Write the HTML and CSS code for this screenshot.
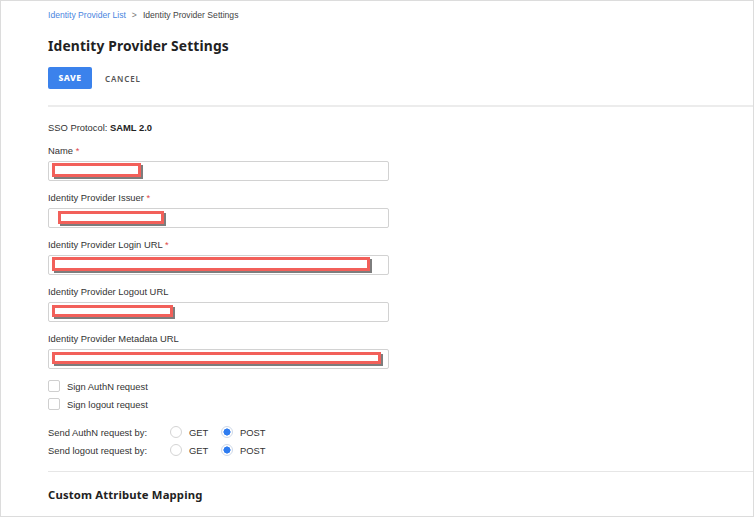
FILE: index.html
```html
<!DOCTYPE html>
<html>
<head>
<meta charset="utf-8">
<link rel="stylesheet" href="styles.css">
</head>
<body>
<div class="frame">
  <div class="head">
    <nav class="crumbs">
      <a class="crumb-link">Identity Provider List</a>
      <span class="crumb-sep">&gt;</span>
      <span class="crumb-current">Identity Provider Settings</span>
    </nav>
    <h1 class="title">Identity Provider Settings</h1>
    <div class="actions">
      <button class="btn-save">SAVE</button>
      <button class="btn-cancel">CANCEL</button>
    </div>
  </div>
  <div class="divider"></div>
  <div class="body">
    <p class="protocol">SSO Protocol: <b>SAML 2.0</b></p>

    <div class="field">
      <label class="label">Name <span class="req">*</span></label>
      <div class="input"><span class="redact" style="width:89px"></span></div>
    </div>
    <div class="field">
      <label class="label">Identity Provider Issuer <span class="req">*</span></label>
      <div class="input"><span class="redact r-in" style="width:106px"></span></div>
    </div>
    <div class="field">
      <label class="label">Identity Provider Login URL <span class="req">*</span></label>
      <div class="input"><span class="redact" style="width:318px"></span></div>
    </div>
    <div class="field">
      <label class="label">Identity Provider Logout URL</label>
      <div class="input"><span class="redact r-thin" style="width:121px"></span></div>
    </div>
    <div class="field">
      <label class="label">Identity Provider Metadata URL</label>
      <div class="input"><span class="redact r-thin" style="width:329px"></span></div>
    </div>

    <div class="checks">
      <div class="check-row"><span class="checkbox"></span><span>Sign AuthN request</span></div>
      <div class="check-row"><span class="checkbox"></span><span>Sign logout request</span></div>
    </div>

    <div class="radios">
      <div class="radio-row">
        <span class="radio-label">Send AuthN request by:</span>
        <span class="radio"></span><span class="radio-text">GET</span>
        <span class="radio on"></span><span class="radio-text">POST</span>
      </div>
      <div class="radio-row">
        <span class="radio-label">Send logout request by:</span>
        <span class="radio"></span><span class="radio-text">GET</span>
        <span class="radio on"></span><span class="radio-text">POST</span>
      </div>
    </div>
  </div>
  <div class="divider thin"></div>
  <div class="body">
    <h2 class="subtitle">Custom Attribute Mapping</h2>
    <p class="cut">Choose from attribute fields that are sent by the identity provider to map attributes</p>
  </div>
</div>
</body>
</html>
```
FILE: styles.css
```css
html, body {
  margin: 0;
  padding: 0;
  background: #fff;
}
.frame {
  box-sizing: border-box;
  width: 754px;
  height: 517px;
  border: 1px solid #dcdcdc;
  overflow: hidden;
  font-family: "Liberation Sans", Arial, sans-serif;
  font-size: 9.4px;
  color: #333;
  background: #fff;
}
.head {
  padding: 8px 0 0 47px;
}
.crumbs {
  display: flex;
  align-items: center;
  height: 12px;
  line-height: 12px;
  font-size: 8.6px;
}
.crumb-link { color: #4a86e0; }
.crumb-sep { color: #777; margin: 0 6px 0 6px; }
.crumb-current { color: #444; }
.title {
  margin: 15px 0 0 0;
  font-family: "Noto Sans", "Open Sans", sans-serif;
  font-weight: 700;
  font-size: 13.8px;
  line-height: 20px;
  height: 20px;
  color: #222;
  letter-spacing: 0.15px;
}
.actions {
  display: flex;
  align-items: center;
  margin-top: 11px;
}
.btn-save {
  width: 44px;
  height: 22px;
  border: none;
  border-radius: 2px;
  background: #3b82ec;
  color: #fff;
  font-family: "Noto Sans", "Open Sans", sans-serif;
  font-weight: 800;
  font-size: 8.6px;
  letter-spacing: 0.5px;
  padding: 0;
}
.btn-cancel {
  margin-left: 13px;
  border: none;
  background: none;
  padding: 0;
  font-family: "Noto Sans", "Open Sans", sans-serif;
  font-weight: 600;
  font-size: 8px;
  letter-spacing: 0.8px;
  color: #555;
}
.divider {
  margin: 16px 0 0 47px;
  height: 2px;
  background: #ececec;
}
.divider.thin {
  margin-top: 12px;
  height: 1px;
  background: #e6e6e6;
}
.body {
  padding-left: 47px;
}
.protocol {
  margin: 15px 0 0 0;
  line-height: 12px;
  height: 12px;
}
.protocol b { color: #222; }
.field {
  margin-top: 11px;
}
.label {
  display: block;
  line-height: 12px;
  height: 12px;
}
.req { color: #e04a4a; }
.input {
  box-sizing: border-box;
  margin-top: 4px;
  width: 341px;
  height: 20px;
  border: 1px solid #d2d2d2;
  border-radius: 2px;
  padding: 1px 0 0 3px;
  display: flex;
}
.redact {
  box-sizing: border-box;
  display: block;
  height: 14px;
  border: 3.5px solid #f2605a;
  background: #fff;
  box-shadow: 2px 2px 0 0 rgba(70, 70, 70, 0.7);
}
.redact.r-in { margin-left: 6px; margin-top: 1px; height: 13px; }
.redact.r-thin { height: 12px; margin-top: 1px; }
.checks {
  margin-top: 8px;
}
.check-row {
  display: flex;
  align-items: center;
  height: 18px;
}
.checkbox {
  box-sizing: border-box;
  width: 12px;
  height: 12px;
  border: 1px solid #cfcfcf;
  border-radius: 2px;
  margin-right: 7px;
  background: #fff;
}
.radios {
  margin-top: 10px;
}
.radio-row {
  display: flex;
  align-items: center;
  height: 18px;
}
.radio-label {
  width: 122px;
}
.radio {
  box-sizing: border-box;
  width: 12px;
  height: 12px;
  border: 1px solid #d4d4d4;
  border-radius: 50%;
  background: #fff;
  margin-right: 7px;
}
.radio.on {
  border-color: #cfd9e8;
  background: radial-gradient(circle, #2f7cf0 0 3.3px, #fff 3.8px);
}
.radio-text {
  width: 32px;
}
.subtitle {
  margin: 15px 0 0 0;
  font-family: "Noto Sans", "Open Sans", sans-serif;
  font-weight: 700;
  font-size: 11.3px;
  line-height: 16px;
  color: #222;
  letter-spacing: 0.15px;
}
.cut {
  margin: 11px 0 0 0;
  line-height: 12px;
  color: #999;
}
```
